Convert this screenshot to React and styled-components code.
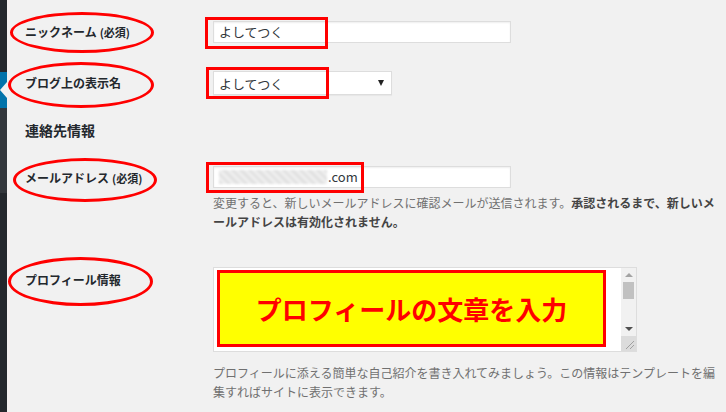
import React from "react";
import styled, { createGlobalStyle } from "styled-components";

const Global = createGlobalStyle`
  html, body { margin: 0; padding: 0; }
  body {
    background: #f1f1f1;
    font-family: "Noto Sans CJK JP", "Noto Sans", sans-serif;
    color: #23282d;
    overflow: hidden;
  }
`;

const Page = styled.div`
  display: flex;
  height: 412px;
  overflow: hidden;
`;

const Sidebar = styled.div`
  width: 7px;
  flex: 0 0 7px;
  background: #23282d;
  display: flex;
  flex-direction: column;
`;

const MenuBlock = styled.div`
  height: ${(p) => p.$h}px;
  background: ${(p) => p.$bg || "#23282d"};
  position: relative;
`;

const CurrentArrow = styled.div`
  position: absolute;
  right: 0;
  top: 10px;
  width: 0;
  height: 0;
  border-top: 8px solid transparent;
  border-bottom: 8px solid transparent;
  border-right: 7px solid #f1f1f1;
`;

const Main = styled.div`
  flex: 1;
  padding-left: 18px;
`;

const Row = styled.div`
  display: grid;
  grid-template-columns: 188px 1fr;
  margin-top: ${(p) => p.$mt}px;
`;

const LabelCell = styled.div`
  position: relative;
  font-size: 12px;
  font-weight: 600;
  line-height: ${(p) => p.$lh}px;
  color: #23282d;
  white-space: nowrap;
`;

const Small = styled.span`
  font-size: 11px;
  margin-left: 3px;
`;

const FieldCell = styled.div`
  position: relative;
`;

const Input = styled.div`
  width: 298px;
  height: 22px;
  box-sizing: border-box;
  border: 1px solid #ddd;
  background: #fff;
  box-shadow: inset 0 1px 2px rgba(0, 0, 0, 0.07);
  padding: 0 5px;
  font-size: 13px;
  line-height: 20px;
  color: #32373c;
  display: flex;
  align-items: center;
`;

const SelectBox = styled.div`
  width: 179px;
  height: 24px;
  box-sizing: border-box;
  border: 1px solid #ddd;
  background: #fff;
  box-shadow: 0 1px 1px rgba(0, 0, 0, 0.04);
  padding: 0 6px 0 5px;
  font-size: 13px;
  color: #32373c;
  display: flex;
  align-items: center;
  justify-content: space-between;
`;

const Caret = styled.span`
  width: 0;
  height: 0;
  border-left: 3px solid transparent;
  border-right: 3px solid transparent;
  border-top: 6px solid #222;
  margin-right: 1px;
`;

const Blurred = styled.span`
  display: inline-block;
  width: 108px;
  height: 14px;
  background:
    repeating-linear-gradient(45deg, #e2e2e2 0 3px, #efefef 3px 6px),
    #e8e8e8;
  filter: blur(1px);
  margin-right: 1px;
`;

const Heading = styled.h2`
  margin: 25px 0 0;
  font-size: 14px;
  line-height: 20px;
  font-weight: 700;
  color: #23282d;
`;

const Description = styled.p`
  margin: ${(p) => p.$mt}px 0 0;
  width: 508px;
  font-size: 12px;
  line-height: 19px;
  color: #707070;
  line-break: loose;
`;

const Strong = styled.strong`
  color: #444;
  font-weight: 700;
`;

const TextArea = styled.div`
  width: 424px;
  height: 85px;
  box-sizing: border-box;
  border: 1px solid #ddd;
  background: #fff;
  display: flex;
`;

const TextBody = styled.div`
  flex: 1;
  padding: 2px 0 0 3px;
`;

const NoteBox = styled.div`
  width: 389px;
  height: 77px;
  box-sizing: border-box;
  border: 3px solid #ff0000;
  background: #ffff00;
  color: #ff0000;
  font-size: 26px;
  font-weight: 700;
  display: flex;
  align-items: center;
  justify-content: center;
`;

const ScrollBar = styled.div`
  width: 15px;
  display: flex;
  flex-direction: column;
  background: #f1f1f1;
`;

const ScrollBtn = styled.div`
  height: 14px;
  display: flex;
  align-items: center;
  justify-content: center;
`;

const TriUp = styled.span`
  width: 0;
  height: 0;
  border-left: 4px solid transparent;
  border-right: 4px solid transparent;
  border-bottom: 4px solid #a3a3a3;
`;

const TriDown = styled.span`
  width: 0;
  height: 0;
  border-left: 4px solid transparent;
  border-right: 4px solid transparent;
  border-top: 4px solid #505050;
`;

const Thumb = styled.div`
  height: 17px;
  margin: 0 2px;
  background: #c1c1c1;
`;

const Track = styled.div`
  flex: 1;
`;

const Corner = styled.div`
  height: 15px;
  background: #dcdcdc;
  display: flex;
  align-items: flex-end;
  justify-content: flex-end;
`;

const Ellipse = styled.div`
  position: absolute;
  left: ${(p) => p.$l}px;
  top: ${(p) => p.$t}px;
  width: ${(p) => p.$w}px;
  height: ${(p) => p.$h}px;
  box-sizing: border-box;
  border: 3px solid #ff0000;
  border-radius: 50%;
  pointer-events: none;
`;

const RedRect = styled.div`
  position: absolute;
  left: ${(p) => p.$l}px;
  top: ${(p) => p.$t}px;
  width: ${(p) => p.$w}px;
  height: ${(p) => p.$h}px;
  box-sizing: border-box;
  border: 3px solid #ff0000;
  pointer-events: none;
`;

export default function App() {
  return (
    <>
      <Global />
      <Page>
        <Sidebar>
          <MenuBlock $h={72} />
          <MenuBlock $h={36} $bg="#0073aa">
            <CurrentArrow />
          </MenuBlock>
          <MenuBlock $h={85} $bg="#32373c" />
        </Sidebar>
        <Main>
          <Row $mt={21}>
            <LabelCell $lh={22}>
              ニックネーム<Small>(必須)</Small>
              <Ellipse $l={-15} $t={-9} $w={144} $h={41} />
            </LabelCell>
            <FieldCell>
              <Input>よしてつく</Input>
              <RedRect $l={-8} $t={-4} $w={123} $h={32} />
            </FieldCell>
          </Row>

          <Row $mt={28}>
            <LabelCell $lh={24}>
              ブログ上の表示名
              <Ellipse $l={-17} $t={-9} $w={146} $h={46} />
            </LabelCell>
            <FieldCell>
              <SelectBox>
                <span>よしてつく</span>
                <Caret />
              </SelectBox>
              <RedRect $l={-7} $t={-4} $w={123} $h={32} />
            </FieldCell>
          </Row>

          <Heading>連絡先情報</Heading>

          <Row $mt={26}>
            <LabelCell $lh={24}>
              メールアドレス<Small>(必須)</Small>
              <Ellipse $l={-12} $t={-8} $w={144} $h={44} />
            </LabelCell>
            <FieldCell>
              <Input>
                <Blurred />
                .com
              </Input>
              <RedRect $l={-7} $t={-4} $w={158} $h={31} />
              <Description $mt={5}>
                変更すると、新しいメールアドレスに確認メールが送信されます。
                <Strong>承認されるまで、新しいメールアドレスは有効化されません。</Strong>
              </Description>
            </FieldCell>
          </Row>

          <Row $mt={36}>
            <LabelCell $lh={26}>
              プロフィール情報
              <Ellipse $l={-17} $t={-10} $w={145} $h={49} />
            </LabelCell>
            <FieldCell>
              <TextArea>
                <TextBody>
                  <NoteBox>プロフィールの文章を入力</NoteBox>
                </TextBody>
                <ScrollBar>
                  <ScrollBtn>
                    <TriUp />
                  </ScrollBtn>
                  <Thumb />
                  <Track />
                  <ScrollBtn>
                    <TriDown />
                  </ScrollBtn>
                  <Corner>
                    <svg width="15" height="15" viewBox="0 0 15 15">
                      <line x1="13" y1="5" x2="5" y2="13" stroke="#a0a0a0" strokeWidth="1" />
                      <line x1="13" y1="9" x2="9" y2="13" stroke="#a0a0a0" strokeWidth="1" />
                    </svg>
                  </Corner>
                </ScrollBar>
              </TextArea>
              <Description $mt={11}>
                プロフィールに添える簡単な自己紹介を書き入れてみましょう。この情報はテンプレートを編集すればサイトに表示できます。
              </Description>
            </FieldCell>
          </Row>
        </Main>
      </Page>
    </>
  );
}
